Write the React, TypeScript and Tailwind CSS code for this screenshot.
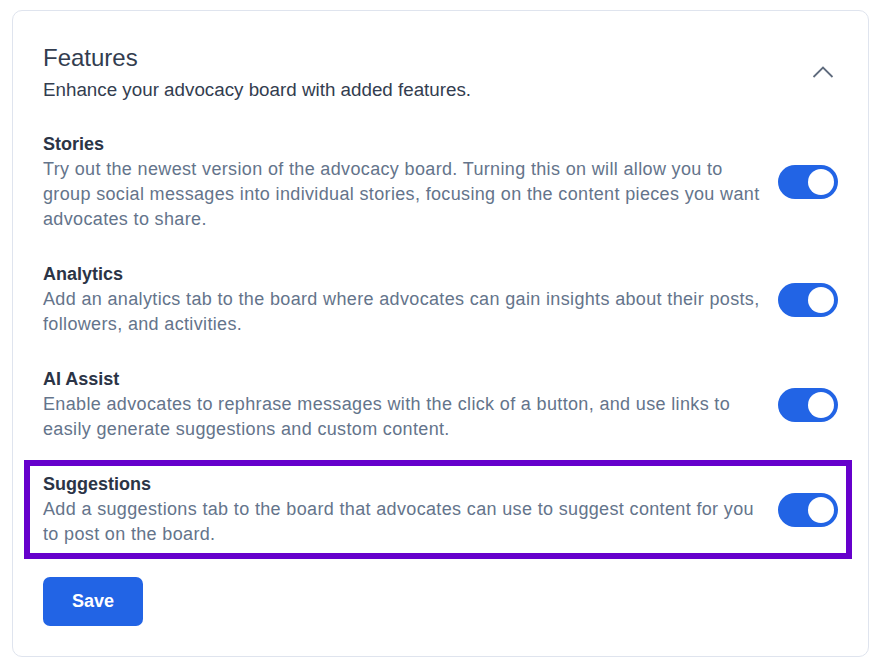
import { useState } from "react";

type Feature = {
  id: string;
  title: string;
  body: string;
  highlight?: boolean;
};

const FEATURES: Feature[] = [
  {
    id: "stories",
    title: "Stories",
    body: "Try out the newest version of the advocacy board. Turning this on will allow you to group social messages into individual stories, focusing on the content pieces you want advocates to share.",
  },
  {
    id: "analytics",
    title: "Analytics",
    body: "Add an analytics tab to the board where advocates can gain insights about their posts, followers, and activities.",
  },
  {
    id: "ai",
    title: "AI Assist",
    body: "Enable advocates to rephrase messages with the click of a button, and use links to easily generate suggestions and custom content.",
  },
  {
    id: "suggestions",
    title: "Suggestions",
    body: "Add a suggestions tab to the board that advocates can use to suggest content for you to post on the board.",
    highlight: true,
  },
];

function Toggle({ on, onClick }: { on: boolean; onClick: () => void }) {
  return (
    <button
      type="button"
      onClick={onClick}
      className={`flex h-[34px] w-[60px] shrink-0 items-center rounded-full p-[4px] ${
        on ? "justify-end bg-[#2264e5]" : "justify-start bg-[#cbd5e1]"
      }`}
    >
      <span className="h-[26px] w-[26px] rounded-full bg-white" />
    </button>
  );
}

export default function App() {
  const [enabled, setEnabled] = useState<Record<string, boolean>>({
    stories: true,
    analytics: true,
    ai: true,
    suggestions: true,
  });

  return (
    <div className="bg-white pl-[12px] pt-[10px] font-['Liberation_Sans',Arial,sans-serif]">
      <section className="w-[857px] rounded-[10px] border border-[#dfe4ee] bg-white px-[30px] pb-[30px] pt-[33px]">
        <div className="flex items-center justify-between">
          <div>
            <h2 className="text-[24px] leading-[28px] text-[#333d4f]">Features</h2>
            <p className="mt-[5px] text-[18.8px] leading-[25px] text-[#333d4f]">
              Enhance your advocacy board with added features.
            </p>
          </div>
          <svg
            width="22"
            height="12"
            viewBox="0 0 22 12"
            fill="none"
            className="-mt-[3px] mr-[4px]"
          >
            <path d="M1.5 11 L11 1.5 L20.5 11" stroke="#5f6b7d" strokeWidth="1.8" />
          </svg>
        </div>

        <div className="mt-[30px] flex flex-col gap-[30px]">
          {FEATURES.map((f) => (
            <div key={f.id} className="relative flex items-center gap-3">
              {f.highlight && (
                <span className="pointer-events-none absolute -bottom-[12px] -left-[19px] -right-[14px] -top-[12px] border-[6px] border-[#6600cc]" />
              )}
              <div className="min-w-0 flex-1">
                <h3 className="text-[18px] font-bold leading-[25px] text-[#2b3446]">
                  {f.title}
                </h3>
                <p className="text-[18px] leading-[25px] tracking-[0.35px] text-[#64748b]">
                  {f.body}
                </p>
              </div>
              <Toggle
                on={enabled[f.id]}
                onClick={() => setEnabled((p) => ({ ...p, [f.id]: !p[f.id] }))}
              />
            </div>
          ))}
        </div>

        <button
          type="button"
          className="mt-[30px] h-[49px] w-[100px] rounded-[7px] bg-[#2264e5] text-[18px] font-bold text-white"
        >
          Save
        </button>
      </section>
    </div>
  );
}
